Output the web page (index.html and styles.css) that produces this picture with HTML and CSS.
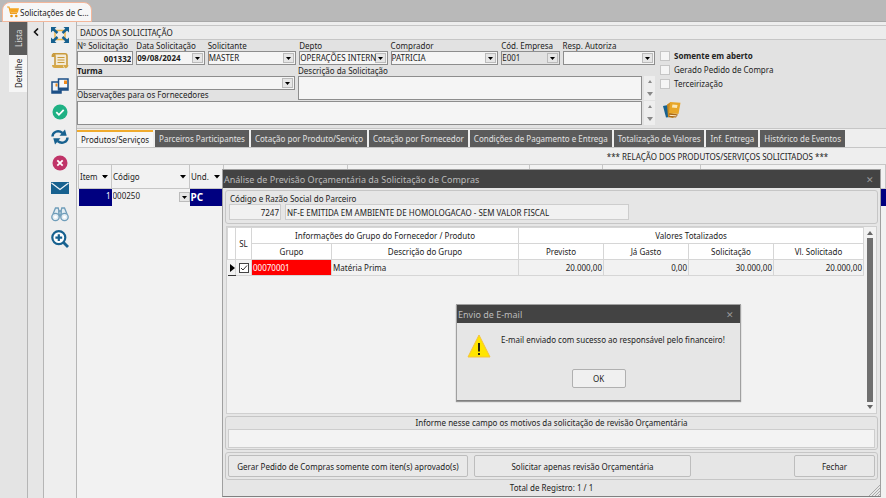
FILE: index.html
```
<!DOCTYPE html>
<html lang="pt-BR">
<head>
    <meta charset="UTF-8">
    <meta name="viewport" content="width=device-width, initial-scale=1.0">
    <title>Solicitações de Compras</title>
    <link rel="stylesheet" href="styles.css">
</head>
<body>
    <header class="topbar">
        <button class="window-tab" type="button">
            <svg class="cart" viewBox="0 0 12 12"><path d="M0 1h2l1.600 6.500h6.400" fill="none" stroke="#efa01f" stroke-width="1.200"/><path d="M2.600 2.200H12L10.800 6.800H3.700z" fill="#f5a623"/><circle cx="4.500" cy="10" r="1.300" fill="#e8930c"/><circle cx="9.300" cy="10" r="1.300" fill="#e8930c"/></svg>
            Solicitações de C...
        </button>
    </header>
    <div class="workspace">
        <nav class="rail">
            <button class="rail-tab rail-dark" type="button">Lista</button>
            <button class="rail-tab" type="button">Detalhe</button>
        </nav>
        <div class="collapse">
            <button class="icon-btn" type="button" aria-label="Recolher">
                <svg width="6" height="8" viewBox="0 0 6 8"><path d="M5 0.500L1.500 4L5 7.500" fill="none" stroke="#111" stroke-width="1.600"/></svg>
            </button>
        </div>
        <div class="toolbar">
            <div class="tool-list">
                <button class="icon-btn" type="button" aria-label="Expandir">
                    <svg viewBox="0 0 18 18"><path d="M4 4.500h10M4 13.500h10M4 5v8M14 5v8" stroke="#f0b440" stroke-width="1.400"/><path d="M1 2l5.500 5M17 2l-5.500 5M1 16l5.500-5M17 16l-5.500-5" stroke="#17618f" stroke-width="2.400"/><path d="M0 1h5.500L0 6.500zM18 1h-5.500L18 6.500zM0 17h5.500L0 11.500zM18 17h-5.500L18 11.500z" fill="#17618f"/></svg>
                </button>
                <button class="icon-btn" type="button" aria-label="Pedido">
                    <svg viewBox="0 0 18 18"><path d="M4 14V4.500C4 2.500 3 1.800 2 1.800h12c1.300 0 2 1 2 2.200v9" fill="#f3ead6" stroke="#c99a3c" stroke-width="1.600"/><path d="M2 1.500C.8 1.500.6 3 .6 5H4" fill="#c99a3c"/><path d="M1 13h11c0 2 .8 3 2 3H4c-2 0-3-1-3-3zM12 13h5.400c0 2-1.200 3.200-3.200 3.200" fill="#d6a848"/><path d="M6.500 5.500h7M6.500 8h7M6.500 10.500h7" stroke="#c99a3c" stroke-width="1.100"/></svg>
                </button>
                <button class="icon-btn" type="button" aria-label="Documentos">
                    <svg viewBox="0 0 18 18"><path d="M1 5h9v11H1z" fill="#eef3f8" stroke="#1c4f86" stroke-width="1.500"/><path d="M1 13.500h9V16H1z" fill="#1c4f86"/><path d="M7.500 2H17v11H7.500z" fill="#f6f8fb" stroke="#1c4f86" stroke-width="1.500"/><path d="M7.500 10.500H17V13H7.500z" fill="#1c4f86"/><path d="M13 3.500h3v3.500h-3zM4.500 6.500h2v3h-2z" fill="#f08a1d"/></svg>
                </button>
                <button class="icon-btn" type="button" aria-label="Confirmar">
                    <svg viewBox="0 0 18 18"><circle cx="9" cy="9" r="7.500" fill="#1fb184"/><path d="M5.300 9.200l2.600 2.600 4.800-5" fill="none" stroke="#fff" stroke-width="1.800"/></svg>
                </button>
                <button class="icon-btn" type="button" aria-label="Atualizar">
                    <svg viewBox="0 0 18 18"><path d="M1.500 8.500C1.500 4 7 1.500 11.500 5M16.500 9.500C16.500 14 11 16.500 6.500 13" fill="none" stroke="#17618f" stroke-width="2.400"/><path d="M8.500 7.800h7.200L14 1.500zM9.500 10.200H2.300L4 16.500z" fill="#17618f"/></svg>
                </button>
                <button class="icon-btn" type="button" aria-label="Cancelar">
                    <svg viewBox="0 0 18 18"><circle cx="9" cy="9" r="7.500" fill="#c03468"/><path d="M6.300 6.300l5.400 5.400M11.700 6.300l-5.400 5.400" stroke="#fff" stroke-width="1.800"/></svg>
                </button>
                <button class="icon-btn" type="button" aria-label="E-mail">
                    <svg viewBox="0 0 18 18"><path d="M0 3h18v12H0z" fill="#17618f"/><path d="M.5 4L9 10.500 17.500 4" fill="none" stroke="#eef4f8" stroke-width="1.200"/></svg>
                </button>
                <button class="icon-btn" type="button" aria-label="Localizar">
                    <svg viewBox="0 0 18 18"><g fill="#e3edf3" stroke="#6f9db9" stroke-width="1.300"><path d="M2 9L4.500 3h2.700l.8 3v6M16 9l-2.500-6h-2.700L10 6v6"/><path d="M8 6h2v4H8z"/><circle cx="4.500" cy="12" r="3.700"/><circle cx="13.500" cy="12" r="3.700"/></g><circle cx="4.500" cy="12" r="1.500" fill="#fff"/><circle cx="13.500" cy="12" r="1.500" fill="#fff"/></svg>
                </button>
                <button class="icon-btn" type="button" aria-label="Ampliar">
                    <svg viewBox="0 0 18 18"><circle cx="7.800" cy="7.600" r="6.500" fill="#fff" stroke="#17618f" stroke-width="2.200"/><path d="M12.300 12.200L17 17" stroke="#17618f" stroke-width="2.800"/><path d="M7.800 4.200v6.800M4.400 7.600h6.800" stroke="#17618f" stroke-width="2.200"/></svg>
                </button>
            </div>
        </div>
        <main class="content">
            <h1 class="section-title">DADOS DA SOLICITAÇÃO</h1>
            <form class="request">
                <div class="fields">
                    <div class="field-row">
                        <div class="field"><label for="numero">Nº Solicitação</label><input class="box strong right" id="numero" value="001332"></div>
                        <div class="field"><label for="data">Data Solicitação</label><select class="box strong" id="data"><option>09/08/2024</option></select></div>
                        <div class="field"><label for="solicitante">Solicitante</label><select class="box" id="solicitante"><option>MASTER</option></select></div>
                        <div class="field"><label for="depto">Depto</label><select class="box" id="depto"><option>OPERAÇÕES INTERN.</option></select></div>
                        <div class="field"><label for="comprador">Comprador</label><select class="box" id="comprador"><option>PATRICIA</option></select></div>
                        <div class="field"><label for="empresa">Cód. Empresa</label><select class="box muted" id="empresa"><option>E001</option></select></div>
                        <div class="field"><label for="autoriza">Resp. Autoriza</label><select class="box" id="autoriza"><option></option></select></div>
                    </div>
                    <div class="detail-row">
                        <div class="field">
                            <label class="strong" for="turma">Turma</label>
                            <select class="box" id="turma"><option></option></select>
                            <label class="notes-label" for="obs">Observações para os Fornecedores</label>
                        </div>
                        <div class="field">
                            <label for="descricao">Descrição da Solicitação</label>
                            <div class="area"><textarea class="box" id="descricao"></textarea><span class="spin"></span></div>
                        </div>
                    </div>
                    <div class="area"><textarea class="box" id="obs"></textarea><span class="spin"></span></div>
                </div>
                <div class="flags">
                    <label class="strong"><input type="checkbox"> Somente em aberto</label>
                    <label><input type="checkbox"> Gerado Pedido de Compra</label>
                    <label><input type="checkbox"> Terceirização</label>
                    <button class="icon-btn books" type="button" aria-label="Livros">
                        <svg viewBox="0 0 18 18"><path d="M0 5l5-1 2 12-4 .5z" fill="#17618f"/><path d="M4 3.500L7 1.500 8 12l6 1-4 4-5-1z" fill="#c98a1e"/><path d="M7 1l10.500.8L15.500 13 6 12z" fill="#e8a628"/><path d="M9.500 3.500l5 .5-.6 3-5-.5z" fill="#fbe7b5"/><path d="M6 12.500l9 1-2 3-7-.5z" fill="#a8671a"/><path d="M6.500 14.300l7 .6" stroke="#fff2d0"/></svg>
                    </button>
                </div>
            </form>
            <div class="tabs">
                <button class="tab active" type="button">Produtos/Serviços</button>
                <button class="tab" type="button">Parceiros Participantes</button>
                <button class="tab" type="button">Cotação por Produto/Serviço</button>
                <button class="tab" type="button">Cotação por Fornecedor</button>
                <button class="tab" type="button">Condições de Pagamento e Entrega</button>
                <button class="tab" type="button">Totalização de Valores</button>
                <button class="tab" type="button">Inf. Entrega</button>
                <button class="tab" type="button">Histórico de Eventos</button>
            </div>
            <h2 class="list-title">*** RELAÇÃO DOS PRODUTOS/SERVIÇOS SOLICITADOS ***</h2>
            <div class="items-wrap">
                <table class="items">
                    <colgroup><col class="c-item"><col class="c-code"><col class="c-unit"><col class="c-a"><col class="c-b"><col class="c-c"><col class="c-d"><col></colgroup>
                    <thead>
                        <tr><th>Item</th><th>Código</th><th>Und.</th><th class="plain"></th><th class="plain"></th><th class="plain"></th><th class="plain"></th><th class="plain"></th></tr>
                    </thead>
                    <tbody>
                        <tr><td class="right">1</td><td class="code"><select aria-label="Código"><option>000250</option></select></td><td class="unit">PC</td><td></td><td></td><td></td><td></td><td></td></tr>
                    </tbody>
                </table>
            </div>
        </main>
    </div>

    <section class="dialog budget">
        <div class="dialog-title">Análise de Previsão Orçamentária da Solicitação de Compras <button class="close" type="button">✕</button></div>
        <div class="group partner">
            <label for="parceiro">Código e Razão Social do Parceiro</label>
            <div class="partner-row">
                <input class="soft right" id="parceiro" value="7247">
                <input class="soft" aria-label="Razão Social" value="NF-E EMITIDA EM AMBIENTE DE HOMOLOGACAO - SEM VALOR FISCAL">
            </div>
        </div>
        <div class="grid-panel">
            <div class="grid-scroll">
                <table class="budget-table">
                    <colgroup><col class="b-mark"><col class="b-check"><col class="b-group"><col class="b-desc"><col class="b-num"><col class="b-num"><col class="b-num"><col class="b-last"></colgroup>
                    <thead>
                        <tr><th rowspan="2"></th><th rowspan="2">SL</th><th colspan="2">Informações do Grupo do Fornecedor / Produto</th><th colspan="4">Valores Totalizados</th></tr>
                        <tr><th>Grupo</th><th>Descrição do Grupo</th><th>Previsto</th><th>Já Gasto</th><th>Solicitação</th><th>Vl. Solicitado</th></tr>
                    </thead>
                    <tbody>
                        <tr>
                            <td class="marker"><svg width="5" height="8" viewBox="0 0 5 8"><path d="M0 0l5 4-5 4z"/></svg></td>
                            <td class="check"><input type="checkbox" aria-label="Selecionar" checked></td>
                            <td class="alert">00070001</td><td>Matéria Prima</td>
                            <td class="right">20.000,00</td><td class="right">0,00</td><td class="right">30.000,00</td><td class="right">20.000,00</td>
                        </tr>
                    </tbody>
                </table>
            </div>
            <div class="scrollbar"><span class="arrow-up"></span><span class="thumb"></span><span class="arrow-down"></span></div>
        </div>
        <div class="group reason">
            <label for="motivo">Informe nesse campo os motivos da solicitação de revisão Orçamentária</label>
            <input class="soft" id="motivo">
        </div>
        <div class="group actions">
            <button class="btn wide" type="button">Gerar Pedido de Compras somente com iten(s) aprovado(s)</button>
            <button class="btn medium" type="button">Solicitar apenas revisão Orçamentária</button>
            <button class="btn small" type="button">Fechar</button>
        </div>
        <footer class="status">Total de Registro: 1 / 1
            <svg class="grip" width="12" height="12" viewBox="0 0 12 12"><path d="M1 12L12 1M4 12l8-8M7 12l5-5M10 12l2-2" stroke="#aaa"/></svg>
        </footer>
    </section>

    <section class="dialog message">
        <div class="dialog-title">Envio de E-mail <button class="close" type="button">✕</button></div>
        <div class="message-body">
            <svg width="24" height="24" viewBox="0 0 24 24"><path d="M12 1l11 22H1z" fill="#ffe500" stroke="#f5c33b"/><path d="M12 9v8.500M12 19v2" stroke="#111" stroke-width="1.800"/></svg>
            <p>E-mail enviado com sucesso ao responsável pelo financeiro!</p>
        </div>
        <button class="btn ok" type="button">OK</button>
    </section>
</body>
</html>
```
FILE: styles.css
```
:root {
    --dark: #434343;
    --tab: #5b5b5b;
    --line: #c6c6c6;
    --panel: #e6e6e6;
    --field: #f5f5f5;
    --navy: #000080;
    --arrow: url("data:image/svg+xml,%3Csvg xmlns='http://www.w3.org/2000/svg' width='11' height='10'%3E%3Crect x='.5' y='.5' width='10' height='9' fill='%23e6e6e6' stroke='%23bbb'/%3E%3Cpath d='M3 4h5L5.500 7z'/%3E%3C/svg%3E");
}
* {
    box-sizing: border-box;
}
body {
    margin: 0;
    height: 100vh;
    display: flex;
    flex-direction: column;
    overflow: hidden;
    background: var(--panel);
    color: #222;
    font-family: "Noto Sans", "Open Sans", sans-serif;
    font-size: 8px;
    line-height: 11px;
}
button, input, select, textarea {
    font: inherit;
    color: inherit;
    margin: 0;
    padding: 0;
    border: 0;
    border-radius: 0;
    background: none;
}
select, input[type="checkbox"] {
    appearance: none;
}
h1, h2, p {
    margin: 0;
    font-size: inherit;
    font-weight: normal;
}
.strong {
    font-weight: bold;
}
.right {
    text-align: right;
}
.topbar {
    flex: none;
    height: 22px;
    padding: 2px 0 0 2px;
    background: #b9b9b9;
    border-bottom: 1px solid #a9a9a9;
}
.window-tab {
    display: flex;
    align-items: center;
    gap: 1px;
    height: 20px;
    padding: 0 2px 0 4px;
    background: #f7f7f7;
    border: 1px solid #f3b79b;
    border-radius: 8px 8px 0 0;
    white-space: nowrap;
}
.cart {
    width: 12px;
    height: 12px;
}
.workspace {
    flex: 1;
    min-height: 0;
    display: flex;
}
.rail {
    flex: none;
    width: 28px;
    padding-left: 9px;
    border-right: 1px solid #b5b5b5;
    background: #e4e4e4;
}
.rail-tab {
    display: block;
    width: 18px;
    height: 37px;
    writing-mode: vertical-rl;
    transform: rotate(180deg);
    text-align: center;
    background: #f6f6f6;
}
.rail-dark {
    height: 33px;
    background: var(--tab);
    color: #ddd;
}
.collapse {
    flex: none;
    width: 16px;
    padding-top: 6px;
    border-right: 1px solid #b5b5b5;
    text-align: center;
}
.icon-btn {
    display: block;
    margin: 0 auto;
    line-height: 0;
}
.toolbar {
    flex: none;
    width: 33px;
    padding-top: 4px;
    background: #eee;
    border-right: 1px solid #b5b5b5;
}
.tool-list {
    height: 222px;
    display: flex;
    flex-direction: column;
    justify-content: space-between;
}
.toolbar svg, .books svg {
    width: 18px;
    height: 18px;
}
.content {
    flex: 1;
    min-width: 0;
    display: flex;
    flex-direction: column;
    padding-top: 3px;
    background: #eee;
}
.section-title {
    height: 15px;
    padding: 1px 3px;
    border-top: 1px solid var(--line);
    border-bottom: 1px solid var(--line);
    background: #ececec;
}
.request {
    display: flex;
    gap: 5px;
    height: 88px;
    padding: 1px 0;
    background: #e2e2e2;
}
.fields {
    width: 578px;
    display: flex;
    flex-direction: column;
    gap: 1px;
}
.field-row {
    display: grid;
    grid-template-columns: 56fr 68fr 88fr 88fr 107fr 58fr 92fr;
    gap: 3px;
}
.detail-row {
    display: grid;
    grid-template-columns: 218px 1fr;
    gap: 3px;
}
.field {
    min-width: 0;
    display: flex;
    flex-direction: column;
}
.field label {
    height: 10px;
    line-height: 10px;
    white-space: nowrap;
}
.box {
    width: 100%;
    min-width: 0;
    height: 14px;
    padding: 0 1px;
    border: 1px solid #8d8d8d;
    background-color: var(--field);
    line-height: 12px;
}
select.box {
    padding: 0 11px 0 0;
    background-image: var(--arrow);
    background-repeat: no-repeat;
    background-position: right 1px center;
}
select.muted {
    background-color: #e2e2e2;
}
.area {
    display: flex;
    gap: 2px;
}
.area textarea {
    flex: 1;
    height: 24px;
    resize: none;
    overflow: hidden;
}
.spin {
    width: 11px;
    background: #eee;
    display: flex;
    flex-direction: column;
    justify-content: space-between;
    align-items: center;
    padding: 4px 0;
}
.spin::before, .arrow-up, .spin::after, .arrow-down {
    content: "";
    border: 3px solid transparent;
}
.spin::before, .arrow-up {
    border-top: 0;
    border-bottom: 4px solid #666;
}
.spin::after, .arrow-down {
    border-bottom: 0;
    border-top: 4px solid #666;
}
.spin::before {
    border-width: 0 2px 3px;
    border-bottom-color: #888;
}
.spin::after {
    border-top-color: #888;
}
.flags {
    display: flex;
    flex-direction: column;
    align-items: flex-start;
    gap: 4px;
    padding-top: 10px;
}
.flags label {
    display: flex;
    align-items: center;
    gap: 4px;
    line-height: 10px;
}
.flags input {
    width: 10px;
    height: 10px;
    background: var(--field);
    border: 1px solid var(--line);
}
.books {
    margin: 8px 0 0 3px;
}
.tabs {
    display: flex;
    gap: 2px;
    height: 20px;
    padding-top: 1px;
    border-top: 1px solid var(--line);
    border-bottom: 1px solid var(--line);
}
.tab {
    padding: 0 4px;
    background: var(--tab);
    color: #e3e3e3;
    white-space: nowrap;
}
.tab.active {
    background: #f6f6f6;
    color: #222;
    border-top: 2px solid #f0ab2e;
}
.list-title {
    height: 16px;
    padding: 3px 0 0 472px;
    text-align: center;
}
.items-wrap {
    flex: 1;
    padding-left: 1px;
    background: #f2f2f2;
}
table {
    width: 100%;
    table-layout: fixed;
    border-collapse: collapse;
}
th {
    font-weight: normal;
}
.c-item { width: 33px; }
.c-code { width: 78px; }
.c-unit { width: 34px; }
.c-a { width: 124px; }
.c-b { width: 182px; }
.c-c { width: 73px; }
.c-d { width: 98px; }
.items th {
    height: 24px;
    padding: 0 1px;
    border: 1px solid var(--line);
    text-align: left;
    background: #f2f2f2 url("data:image/svg+xml,%3Csvg xmlns='http://www.w3.org/2000/svg' width='6' height='4'%3E%3Cpath d='M0 0h6L3 3.500z'/%3E%3C/svg%3E") no-repeat right 3px center;
}
.items th.plain {
    background-image: none;
}
.items td {
    height: 17px;
    padding: 0 1px;
    background: var(--navy);
    color: #fff;
}
.items .right {
    padding: 0 1px 4px;
}
.items .code {
    padding: 0;
    background: #f2f2f2;
    color: #222;
}
.code select {
    display: block;
    width: 100%;
    height: 16px;
    padding: 0 0 4px 1px;
    background: var(--arrow) no-repeat right center;
}
.items .unit {
    font-size: 10px;
    font-weight: bold;
}
.dialog {
    position: absolute;
    display: flex;
    flex-direction: column;
    background: var(--panel);
    border: 1px solid #a0a0a0;
    border-bottom-color: #808080;
}
.budget {
    left: 222px;
    right: 5px;
    top: 169px;
    bottom: 1px;
    gap: 2px;
}
.dialog-title {
    display: flex;
    align-items: center;
    justify-content: space-between;
    height: 18px;
    padding: 0 6px 0 1px;
    background: var(--dark);
    color: #bbb;
    font-size: 9px;
}
.close {
    color: #999;
}
.group {
    margin: 0 2px;
    border: 1px solid var(--line);
    border-radius: 3px;
}
.partner {
    height: 34px;
    padding: 2px 3px;
}
.partner label {
    display: block;
    padding-left: 1px;
}
.partner-row {
    display: flex;
    gap: 4px;
}
.soft {
    height: 16px;
    padding: 0 1px;
    border: 1px solid #cdcdcd;
    background: #f1f1f1;
}
.partner-row .soft {
    width: 344px;
}
.partner-row .right {
    width: 52px;
}
.grid-panel {
    flex: 1;
    min-height: 0;
    display: flex;
    margin: 0 3px;
    border: 1px solid #d0d0d0;
    background: #f2f2f2;
}
.grid-scroll {
    flex: 1;
}
.b-mark { width: 8px; }
.b-check { width: 16px; }
.b-group { width: 80px; }
.b-desc { width: 187px; }
.b-num { width: 85px; }
.budget-table th, .budget-table td {
    height: 16px;
    padding: 0 1px;
    border: 1px solid #d6d6d6;
}
.budget-table th {
    background: #fff;
}
.budget-table .marker {
    padding: 0 2px;
    border-color: #333;
    border-width: 1px 0;
    line-height: 0;
}
.check input {
    display: block;
    width: 10px;
    height: 10px;
    margin: 0 auto;
    border: 1px solid #444;
    background: #fff url("data:image/svg+xml,%3Csvg xmlns='http://www.w3.org/2000/svg' width='8' height='8'%3E%3Cpath d='M1 4l2 2 4-4.500' fill='none' stroke='%23333'/%3E%3C/svg%3E") center no-repeat;
}
.budget-table .alert {
    background: #f00;
    color: #fff;
}
.scrollbar {
    width: 12px;
    display: flex;
    flex-direction: column;
    align-items: center;
    gap: 3px;
    padding: 4px 0;
}
.thumb {
    flex: 1;
    width: 6px;
    background: #6f6f6f;
}
.reason {
    height: 34px;
    padding: 0 2px;
    text-align: center;
}
.reason label {
    display: block;
    line-height: 12px;
}
.reason .soft {
    display: block;
    width: 100%;
    height: 19px;
    background: #f3f3f3;
}
.actions {
    display: flex;
    gap: 6px;
    padding: 2px;
}
.btn {
    height: 22px;
    border: 1px solid #bdbdbd;
    border-radius: 2px;
    background: #e9e9e9;
}
.wide { width: 240px; }
.medium { width: 217px; }
.small {
    width: 81px;
    margin-left: auto;
}
.status {
    position: relative;
    height: 14px;
    text-align: center;
}
.grip {
    position: absolute;
    right: 0;
    bottom: 0;
}
.message {
    left: 456px;
    top: 304px;
    width: 285px;
    height: 97px;
    box-shadow: 0 1px 1px #999;
}
.message-body {
    display: flex;
    gap: 10px;
    padding: 11px 10px 0;
}
.ok {
    width: 54px;
    height: 19px;
    margin: 11px auto 0;
    background: #f0f0f0;
    border-color: #b0b0b0;
}
```
